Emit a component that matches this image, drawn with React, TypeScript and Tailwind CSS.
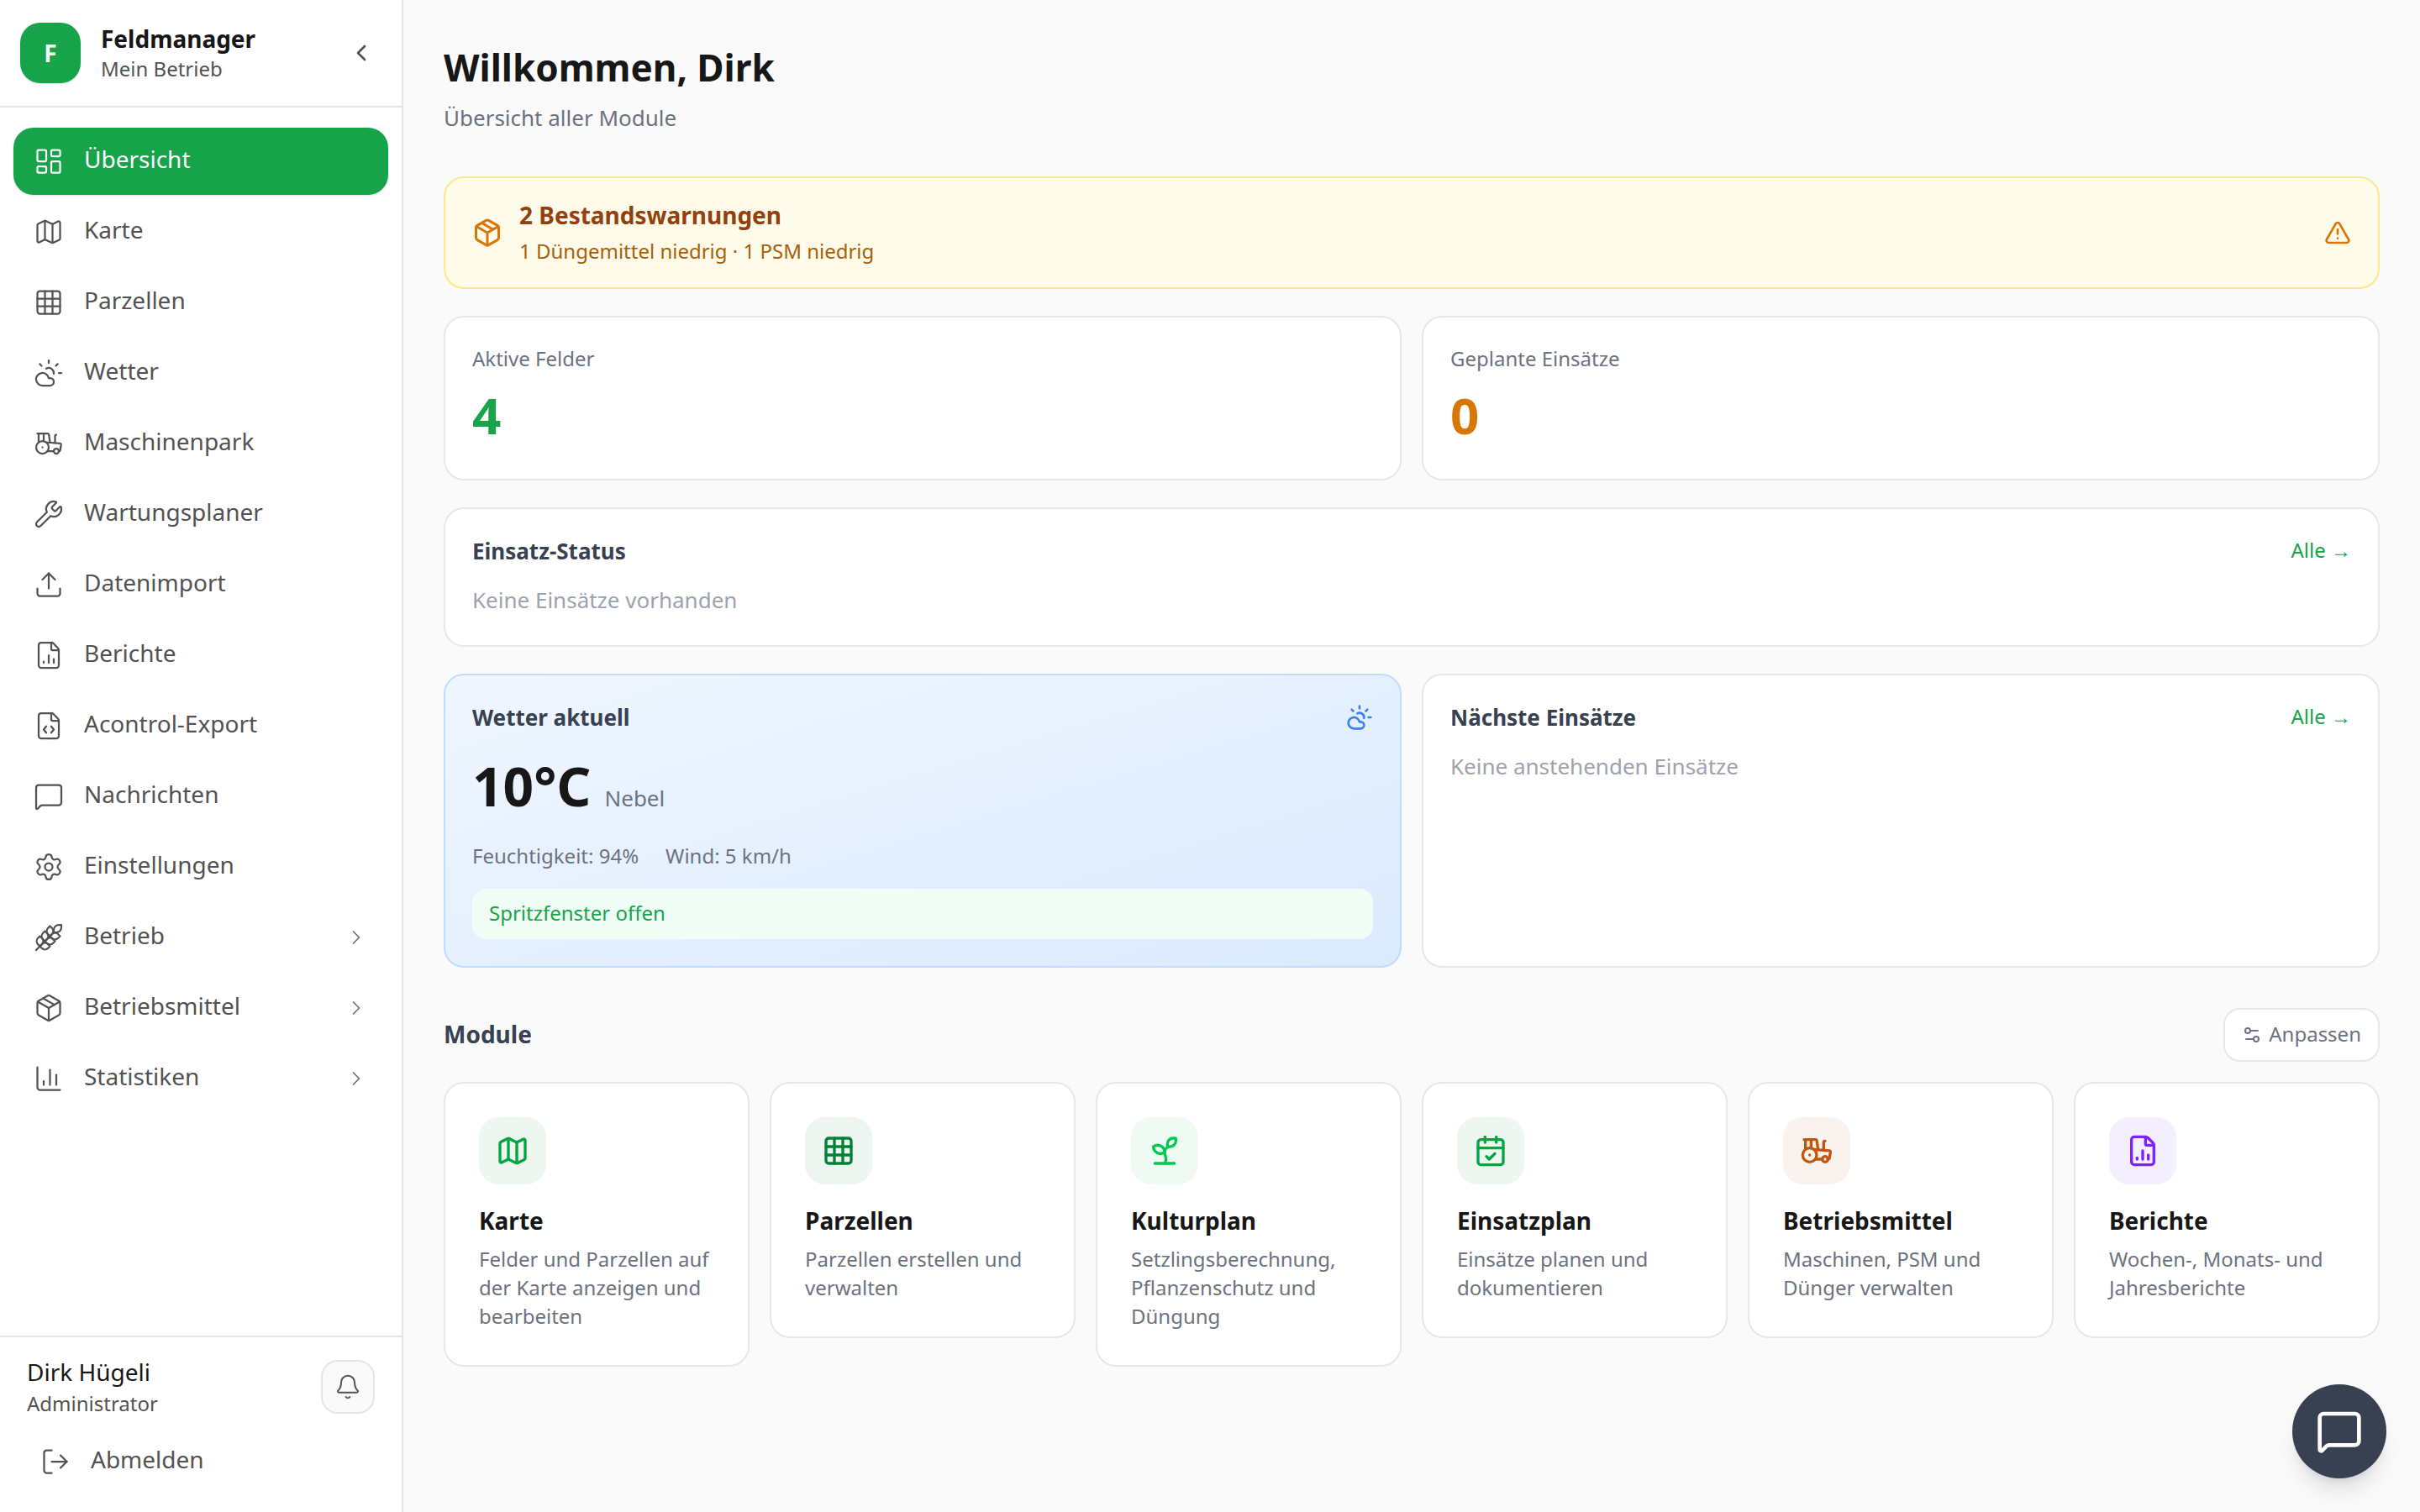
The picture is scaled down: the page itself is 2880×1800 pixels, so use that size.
import React from "react";
import {
  Bell,
  CalendarCheck,
  ChartColumn,
  ChevronLeft,
  ChevronRight,
  CloudSun,
  FileChartColumn,
  FileCode,
  Grid3x3,
  LayoutDashboard,
  LogOut,
  Map,
  MessageSquare,
  Package,
  Settings,
  Settings2,
  Sprout,
  Tractor,
  TriangleAlert,
  Upload,
  Wheat,
  Wrench,
} from "lucide-react";

const navItems = [
  { label: "Übersicht", icon: LayoutDashboard, active: true },
  { label: "Karte", icon: Map },
  { label: "Parzellen", icon: Grid3x3 },
  { label: "Wetter", icon: CloudSun },
  { label: "Maschinenpark", icon: Tractor },
  { label: "Wartungsplaner", icon: Wrench },
  { label: "Datenimport", icon: Upload },
  { label: "Berichte", icon: FileChartColumn },
  { label: "Acontrol-Export", icon: FileCode },
  { label: "Nachrichten", icon: MessageSquare },
  { label: "Einstellungen", icon: Settings },
  { label: "Betrieb", icon: Wheat, more: true },
  { label: "Betriebsmittel", icon: Package, more: true },
  { label: "Statistiken", icon: ChartColumn, more: true },
];

const modules = [
  {
    title: "Karte",
    text: "Felder und Parzellen auf der Karte anzeigen und bearbeiten",
    icon: Map,
    box: "bg-[#edf7f0] text-green-600",
  },
  {
    title: "Parzellen",
    text: "Parzellen erstellen und verwalten",
    icon: Grid3x3,
    box: "bg-[#edf5f0] text-green-700",
  },
  {
    title: "Kulturplan",
    text: "Setzlingsberechnung, Pflanzenschutz und Düngung",
    icon: Sprout,
    box: "bg-[#eefaf2] text-green-500",
  },
  {
    title: "Einsatzplan",
    text: "Einsätze planen und dokumentieren",
    icon: CalendarCheck,
    box: "bg-[#edf7f0] text-green-600",
  },
  {
    title: "Betriebsmittel",
    text: "Maschinen, PSM und Dünger verwalten",
    icon: Tractor,
    box: "bg-[#f9f2ee] text-[#c2570c]",
  },
  {
    title: "Berichte",
    text: "Wochen-, Monats- und Jahresberichte",
    icon: FileChartColumn,
    box: "bg-[#f3effe] text-violet-600",
  },
];

const Sidebar = () => (
  <aside className="flex h-screen w-[480px] shrink-0 flex-col border-r-2 border-[#e5e5e5] bg-white">
    <div className="flex h-[128px] shrink-0 items-center gap-[24px] border-b-2 border-[#e5e5e5] px-[24px]">
      <div className="flex h-[72px] w-[72px] items-center justify-center rounded-[24px] bg-[#16a34a] text-[28px] font-bold text-white shadow-sm">
        F
      </div>
      <div className="flex-1">
        <div className="text-[28px] leading-[38px] font-bold text-[#171717]">Feldmanager</div>
        <div className="text-[24px] leading-[34px] text-[#525252]">Mein Betrieb</div>
      </div>
      <ChevronLeft className="mr-[8px] h-[32px] w-[32px] text-[#525252]" strokeWidth={2} />
    </div>

    <nav className="flex flex-1 flex-col gap-[4px] px-[16px] py-[24px]">
      {navItems.map((item) => (
        <div
          key={item.label}
          className={`flex h-[80px] items-center gap-[24px] rounded-[24px] px-[24px] text-[28px] ${
            item.active ? "bg-[#16a34a] text-white shadow-sm" : "text-[#525252]"
          }`}
        >
          <item.icon className="h-[36px] w-[36px] shrink-0" strokeWidth={1.5} />
          <span className="flex-1 pb-[6px]">{item.label}</span>
          {item.more && <ChevronRight className="h-[28px] w-[28px] text-[#737373]" strokeWidth={1.5} />}
        </div>
      ))}
    </nav>

    <div className="shrink-0 border-t-2 border-[#e5e5e5]">
      <div className="flex items-center justify-between px-[32px] pt-[21px]">
        <div>
          <div className="text-[28px] leading-[40px] text-[#171717]">Dirk Hügeli</div>
          <div className="text-[24px] leading-[36px] text-[#525252]">Administrator</div>
        </div>
        <div className="flex h-[64px] w-[64px] items-center justify-center rounded-[20px] border-2 border-[#e5e5e5] bg-[#fafafa] text-[#525252]">
          <Bell className="h-[32px] w-[32px]" strokeWidth={1.5} />
        </div>
      </div>
      <div className="mx-[24px] mt-[11px] mb-[20px] flex h-[80px] items-center gap-[24px] px-[24px] text-[28px] text-[#525252]">
        <LogOut className="h-[36px] w-[36px]" strokeWidth={1.5} />
        <span className="pb-[6px]">Abmelden</span>
      </div>
    </div>
  </aside>
);

const StatCard = ({ label, value, color }: { label: string; value: string; color: string }) => (
  <div className="rounded-[24px] border-2 border-[#e5e7eb] bg-white p-[32px]">
    <div className="text-[24px] leading-[34px] text-[#6b7280]">{label}</div>
    <div className={`mt-[8px] mb-[2px] text-[60px] leading-[84px] font-bold ${color}`}>{value}</div>
  </div>
);

const CardHead = ({ title }: { title: string }) => (
  <div className="flex items-center justify-between">
    <h3 className="text-[26px] leading-[36px] font-bold text-[#374151]">{title}</h3>
    <span className="pb-[2px] text-[24px] leading-[34px] text-[#16a34a]">Alle →</span>
  </div>
);

export default function App() {
  return (
    <div className="flex h-screen overflow-hidden bg-[#fafafa] font-['Noto_Sans',sans-serif]">
      <Sidebar />

      <main className="relative flex-1 p-[48px]">
        <h1 className="text-[44px] leading-[64px] font-bold text-[#171717]">Willkommen, Dirk</h1>
        <p className="mt-[8px] text-[26px] leading-[40px] text-[#6b7280]">Übersicht aller Module</p>

        <div className="mt-[50px] flex items-center gap-[20px] rounded-[24px] border-2 border-[#fde68a] bg-[#fffbeb] px-[32px] py-[24px]">
          <Package className="h-[36px] w-[36px] text-[#d97706]" strokeWidth={2} />
          <div className="flex-1">
            <div className="text-[28px] leading-[40px] font-bold text-[#92400e]">2 Bestandswarnungen</div>
            <div className="mt-[4px] text-[24px] leading-[38px] text-[#a86008]">1 Düngemittel niedrig · 1 PSM niedrig</div>
          </div>
          <TriangleAlert className="h-[32px] w-[32px] text-[#d97706]" strokeWidth={2} />
        </div>

        <div className="mt-[32px] grid grid-cols-2 gap-[24px]">
          <StatCard label="Aktive Felder" value="4" color="text-[#16a34a]" />
          <StatCard label="Geplante Einsätze" value="0" color="text-[#d97706]" />
        </div>

        <div className="mt-[32px] rounded-[24px] border-2 border-[#e5e7eb] bg-white p-[32px]">
          <CardHead title="Einsatz-Status" />
          <p className="mt-[19px] mb-[1px] text-[26px] leading-[42px] text-[#9ca3af]">Keine Einsätze vorhanden</p>
        </div>

        <div className="mt-[32px] grid grid-cols-2 gap-[24px]">
          <div className="rounded-[24px] border-2 border-[#bfdbfe] bg-gradient-to-br from-[#eff6ff] to-[#dbeafe] p-[32px]">
            <div className="flex items-center justify-between">
              <h3 className="text-[26px] leading-[36px] font-bold text-[#374151]">Wetter aktuell</h3>
              <CloudSun className="h-[32px] w-[32px] text-[#3b82f6]" strokeWidth={2} />
            </div>
            <div className="mt-[20px] flex items-baseline gap-[16px]">
              <span className="text-[64px] leading-[88px] font-bold text-[#171717]">10°C</span>
              <span className="text-[26px] text-[#6b7280]">Nebel</span>
            </div>
            <div className="mt-[21px] flex gap-[32px] text-[24px] leading-[36px] text-[#6b7280]">
              <span>Feuchtigkeit: 94%</span>
              <span>Wind: 5 km/h</span>
            </div>
            <div className="mt-[21px] flex h-[60px] items-center rounded-[16px] bg-[#f0fdf4] px-[20px] pb-[2px] text-[24px] text-[#16a34a]">
              Spritzfenster offen
            </div>
          </div>
          <div className="rounded-[24px] border-2 border-[#e5e7eb] bg-white p-[32px]">
            <CardHead title="Nächste Einsätze" />
            <p className="mt-[19px] text-[26px] leading-[42px] text-[#9ca3af]">Keine anstehenden Einsätze</p>
          </div>
        </div>

        <div className="mt-[48px] mb-[24px] flex items-center justify-between">
          <h2 className="pb-[2px] text-[28px] font-bold text-[#374151]">Module</h2>
          <div className="flex h-[64px] items-center gap-[8px] rounded-[20px] border-2 border-[#e5e7eb] bg-white pr-[20px] pl-[20px] text-[24px] text-[#6b7280]">
            <Settings2 className="h-[24px] w-[24px]" strokeWidth={2} />
            <span className="pb-[2px]">Anpassen</span>
          </div>
        </div>

        <div className="grid grid-cols-6 items-start gap-[24px]">
          {modules.map((m) => (
            <div key={m.title} className="rounded-[24px] border-2 border-[#e5e7eb] bg-white p-[40px]">
              <div className={`flex h-[80px] w-[80px] items-center justify-center rounded-[24px] ${m.box}`}>
                <m.icon className="h-[40px] w-[40px]" strokeWidth={2} />
              </div>
              <div className="mt-[22px] text-[28px] leading-[42px] font-bold text-[#171717]">{m.title}</div>
              <p className="mt-[8px] mb-[1px] text-[24px] leading-[34px] text-[#6b7280]">{m.text}</p>
            </div>
          ))}
        </div>

        <div className="absolute right-[40px] bottom-[40px] flex h-[112px] w-[112px] items-center justify-center rounded-full bg-[#374151] text-white shadow-xl">
          <MessageSquare className="h-[56px] w-[56px]" strokeWidth={2} />
        </div>
      </main>
    </div>
  );
}
